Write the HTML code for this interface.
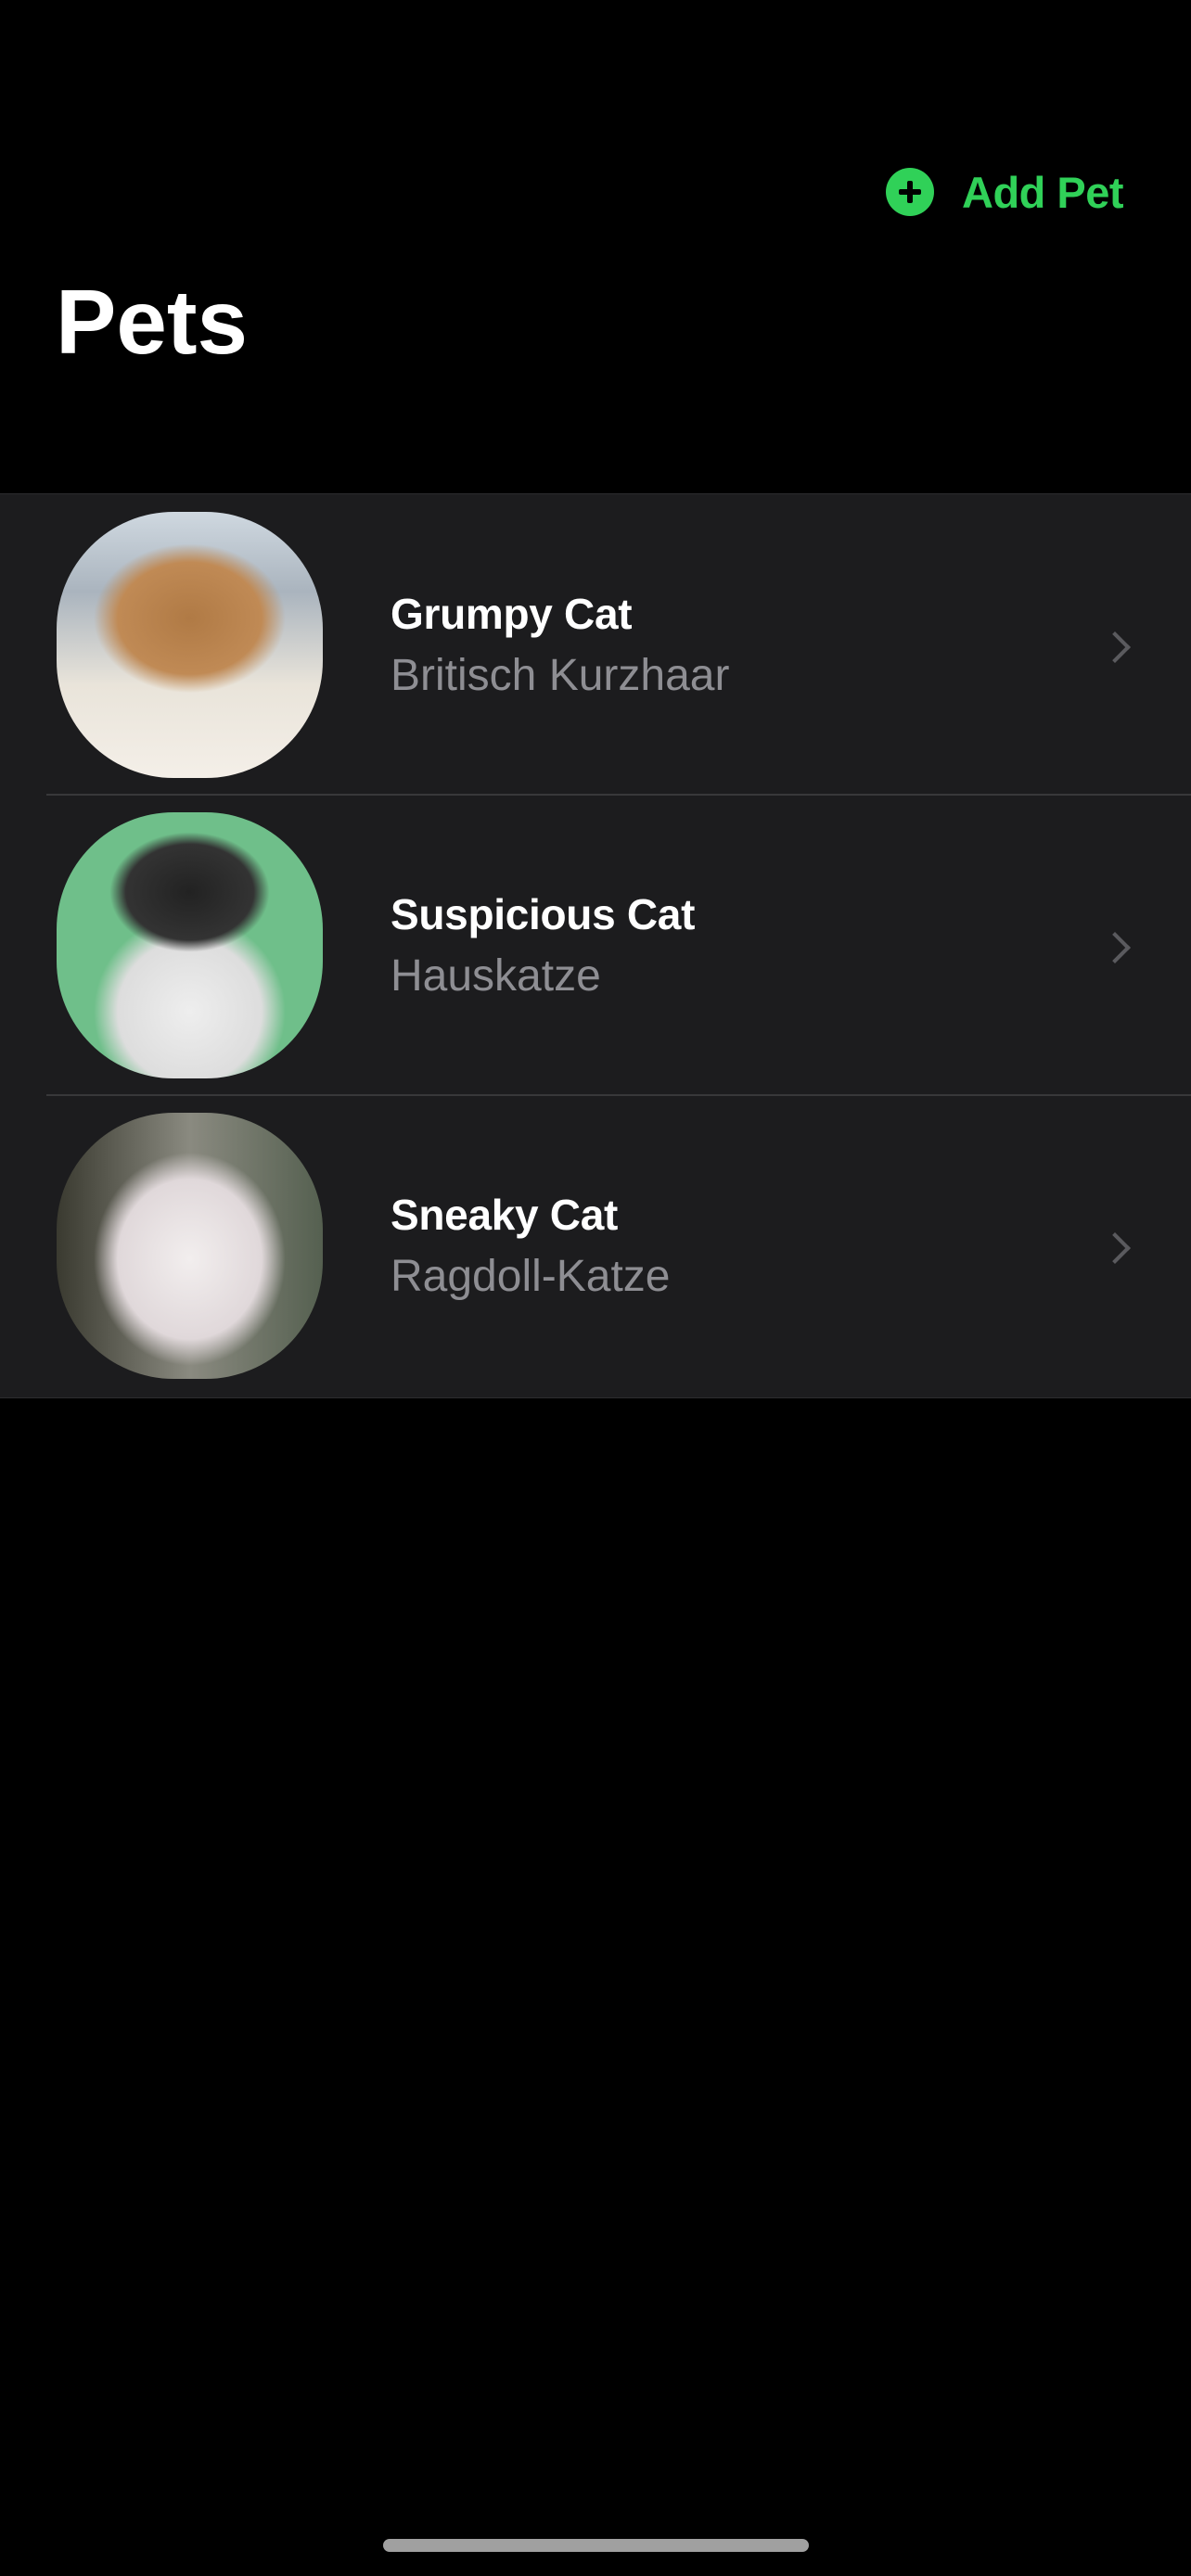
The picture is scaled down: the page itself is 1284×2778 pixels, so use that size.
<!DOCTYPE html>
<html><head><meta charset="utf-8"><style>
html,body{margin:0;padding:0;background:#000;width:1284px;height:2778px;overflow:hidden;font-family:"Liberation Sans",sans-serif;}
.abs{position:absolute}
.add{left:955px;top:181px;width:52px;height:52px;border-radius:50%;background:#30d158}
.add:before{content:"";position:absolute;left:14px;top:23px;width:24px;height:6px;background:#000;border-radius:2px}
.add:after{content:"";position:absolute;left:23px;top:14px;width:6px;height:24px;background:#000;border-radius:2px}
.addt{left:1037px;top:178px;font-size:47px;color:#30d158;font-weight:bold;line-height:60px;letter-spacing:-0.5px}
.title{left:60px;top:292px;font-size:98px;font-weight:bold;color:#fff;line-height:110px}
.list{left:0;top:532px;width:1284px;height:974px;background:#1c1c1e;border-top:1px solid #2c2c2e;border-bottom:1px solid #2c2c2e}
.sep{left:50px;width:1234px;height:2px;background:#38383a}
.img{left:61px;width:287px;height:287px;border-radius:44%/44%;overflow:hidden}
.name{left:421px;font-size:46px;color:#fff;font-weight:bold;line-height:56px;letter-spacing:-0.3px}
.sub{left:421px;font-size:48px;color:#8e8e93;line-height:56px}
.chev{left:1190px;width:20px;height:20px;border-right:4px solid #5a5a5e;border-top:4px solid #5a5a5e;transform:rotate(45deg)}
.home{left:413px;top:2738px;width:459px;height:14px;border-radius:7px;background:#a0a0a0}
</style></head><body>
<div class="abs add"></div>
<div class="abs addt">Add Pet</div>
<div class="abs title">Pets</div>
<div class="abs list"></div>
<div class="abs sep" style="top:856px"></div>
<div class="abs sep" style="top:1180px"></div>

<div class="abs img" style="top:552px;background:radial-gradient(ellipse 45% 35% at 50% 40%,#b07a45,#c08a55 60%,transparent 80%),linear-gradient(#cfd8e0,#aab4be 30%,#e9e4da 65%,#f4efe8)"></div>
<div class="abs name" style="top:634px">Grumpy Cat</div>
<div class="abs sub" style="top:701px">Britisch Kurzhaar</div>
<div class="abs chev" style="top:686px"></div>

<div class="abs img" style="top:876px;background:radial-gradient(ellipse 40% 30% at 50% 30%,#222 0,#333 60%,transparent 75%),radial-gradient(ellipse 45% 45% at 50% 75%,#eee,#ddd 60%,transparent 80%),#6fbf8a"></div>
<div class="abs name" style="top:958px">Suspicious Cat</div>
<div class="abs sub" style="top:1025px">Hauskatze</div>
<div class="abs chev" style="top:1010px"></div>

<div class="abs img" style="top:1200px;background:radial-gradient(ellipse 45% 50% at 50% 55%,#f2eeee,#e0d8da 60%,transparent 80%),linear-gradient(90deg,#3a3a30,#8a8a80 50%,#556050)"></div>
<div class="abs name" style="top:1282px">Sneaky Cat</div>
<div class="abs sub" style="top:1349px">Ragdoll-Katze</div>
<div class="abs chev" style="top:1334px"></div>

<div class="abs home"></div>
</body></html>
